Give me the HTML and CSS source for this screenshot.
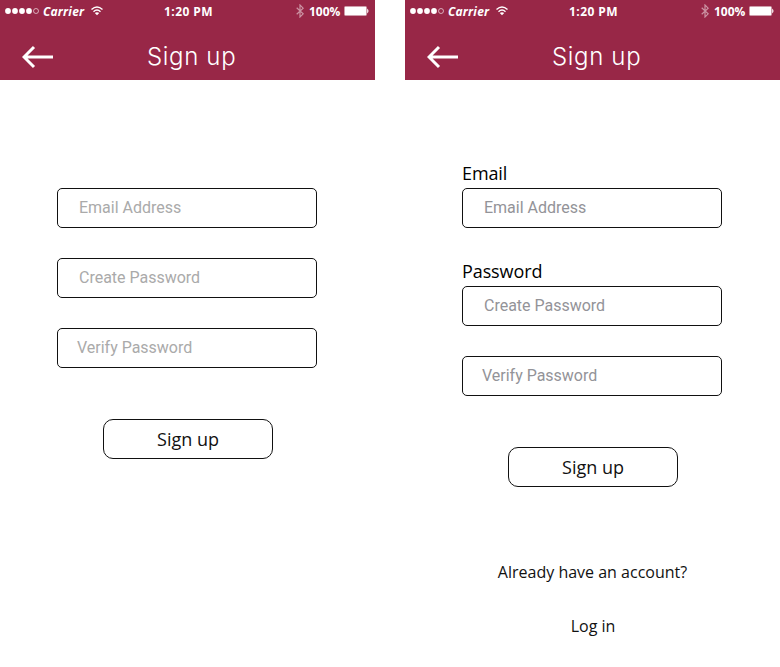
FILE: index.html
```
<!DOCTYPE html>
<html lang="en">
<head>
<meta charset="utf-8">
<title>Sign up</title>
<link rel="stylesheet" href="styles.css">
</head>
<body>
<svg class="defs" aria-hidden="true">
  <symbol id="signal" viewBox="0 0 35 12">
    <g fill="#fff"><circle cx="3" cy="6" r="2.900"/><circle cx="10" cy="6" r="2.900"/><circle cx="17" cy="6" r="2.900"/><circle cx="24" cy="6" r="2.900"/></g>
    <circle cx="31" cy="6" r="2.500" fill="none" stroke="#fff" stroke-width=".6"/>
  </symbol>
  <symbol id="wifi" viewBox="0 0 12 10">
    <g fill="none" stroke="#fff" stroke-width="1.4"><path d="M.5 3.500Q6-1.500 11.500 3.500"/><path d="M2.500 5.700Q6 2.500 9.500 5.700"/></g>
    <path d="M3.800 7Q6 5.300 8.200 7L6 9.300Z" fill="#fff"/>
  </symbol>
  <symbol id="bluetooth" viewBox="0 0 8 14">
    <path d="M.7 3.700L7.200 9.800 4 13V1L7.200 4.200.7 10.300" fill="none" stroke="#fff" stroke-opacity=".5" stroke-width="1.2"/>
  </symbol>
  <symbol id="battery" viewBox="0 0 25 10">
    <rect x=".5" y=".5" width="22" height="9" rx="1" fill="#fff" stroke="#cf9dab"/>
    <path d="M23.200 2.500Q25.800 5 23.200 7.500Z" fill="#fff"/>
  </symbol>
  <symbol id="back" viewBox="0 0 32 24">
    <path d="M12 2L2 12L12 22M2 12H31" fill="none" stroke="#fff" stroke-width="3"/>
  </symbol>
</svg>
<div class="board">
  <section class="screen">
    <header class="header">
      <div class="status">
        <svg class="signal"><use href="#signal"/></svg><span class="carrier">Carrier</span><svg class="wifi"><use href="#wifi"/></svg>
        <span class="time">1:20 PM</span>
        <svg class="bluetooth"><use href="#bluetooth"/></svg><span class="percent">100%</span><svg class="battery"><use href="#battery"/></svg>
      </div>
      <div class="nav"><svg class="back"><use href="#back"/></svg><h1 class="title">Sign up</h1></div>
    </header>
    <form class="form">
      <div class="field">Email Address</div>
      <div class="field">Create Password</div>
      <div class="field verify">Verify Password</div>
      <div class="button">Sign up</div>
    </form>
  </section>
  <section class="screen labelled">
    <header class="header">
      <div class="status">
        <svg class="signal"><use href="#signal"/></svg><span class="carrier">Carrier</span><svg class="wifi"><use href="#wifi"/></svg>
        <span class="time">1:20 PM</span>
        <svg class="bluetooth"><use href="#bluetooth"/></svg><span class="percent">100%</span><svg class="battery"><use href="#battery"/></svg>
      </div>
      <div class="nav"><svg class="back"><use href="#back"/></svg><h1 class="title">Sign up</h1></div>
    </header>
    <form class="form">
      <div class="label">Email</div>
      <div class="field">Email Address</div>
      <div class="label">Password</div>
      <div class="field">Create Password</div>
      <div class="field verify">Verify Password</div>
      <div class="button">Sign up</div>
    </form>
    <footer class="links"><p class="link">Already have an account?</p><p class="link login">Log in</p></footer>
  </section>
</div>
</body>
</html>
```
FILE: styles.css
```
* { box-sizing: border-box; }
body { margin: 0; background: #fff; color: #111; font-family: "Open Sans", sans-serif; }
.defs { position: absolute; width: 0; height: 0; }
.board { display: flex; gap: 30px; height: 667px; overflow: hidden; }
.screen { width: 375px; flex: none; }
.header { height: 80px; background: #982747; color: #fff; }
.status { display: flex; align-items: center; height: 22px; padding-left: 5px; font-size: 12px; font-weight: 700; line-height: 20px; white-space: nowrap; }
.status span { padding-top: 2px; }
.status svg { flex: none; }
.signal { width: 35px; height: 12px; }
.carrier { width: 51px; padding-left: 3px; font-style: italic; letter-spacing: .2px; }
.wifi { width: 12px; height: 10px; }
.time { width: 131px; padding-left: 61px; letter-spacing: .45px; }
.bluetooth { width: 8px; height: 14px; margin-left: 62px; }
.percent { width: 40px; padding-left: 5px; }
.battery { width: 25px; height: 10px; }
.nav { display: flex; align-items: center; height: 58px; padding: 12px 0 0 22px; }
.back { width: 32px; height: 24px; flex: none; }
.title { margin: -1px 0 0 93px; font-family: Inter, sans-serif; font-size: 24px; font-weight: 300; line-height: 36px; letter-spacing: .65px; white-space: nowrap; }
.form { display: flex; flex-direction: column; width: 260px; margin: 108px 0 0 57px; }
.field { height: 40px; margin-bottom: 30px; padding-left: 21px; border: 1px solid #111; border-radius: 5px; font: 16px/38px Roboto, sans-serif; letter-spacing: -.01px; color: #aaa; }
.verify { padding-left: 19px; margin-bottom: 51px; }
.button { width: 170px; height: 40px; margin-left: 46px; border: 1px solid #111; border-radius: 10px; font-size: 18px; line-height: 38px; text-align: center; }
.labelled .form { margin-top: 80px; }
.labelled .field { color: #939398; }
.label { height: 28px; font-size: 18px; line-height: 26px; color: #000; letter-spacing: -.1px; }
.links { display: flex; flex-direction: column; align-items: center; gap: 30px; margin-top: 73px; }
.link { margin: 0; font-size: 16px; line-height: 24px; }
.login { padding-left: 1px; }
```
